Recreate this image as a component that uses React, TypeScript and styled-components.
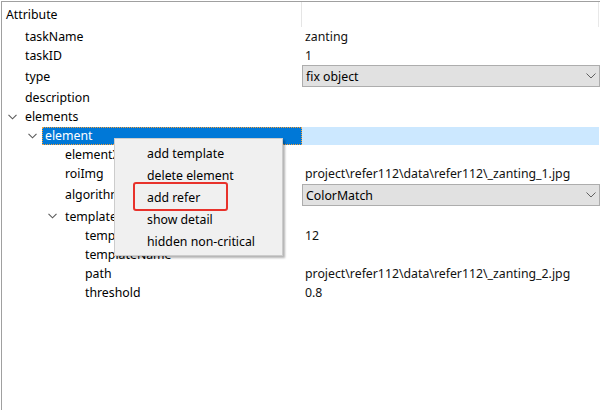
import React from "react";
import styled, { createGlobalStyle } from "styled-components";

const Global = createGlobalStyle`
  html, body { margin: 0; padding: 0; background: #ffffff; }
  body { width: 600px; height: 410px; overflow: hidden; font-family: "Noto Sans", "Open Sans", sans-serif; font-size: 12.3px; color: #000; }
`;

const Panel = styled.div`
  position: relative;
  margin: 1px 0 0 1px;
  height: 409px;
  border-top: 1px solid #a0a0a0;
  border-left: 1px solid #a0a0a0;
  box-sizing: border-box;
  display: flex;
  flex-direction: column;
`;

const Header = styled.div`
  display: grid;
  grid-template-columns: 300px 1fr;
  height: 25px;
`;

const HeaderCell = styled.div<{ $last?: boolean }>`
  display: flex;
  align-items: center;
  padding-left: 4px;
  border-right: 1px solid ${(p) => (p.$last ? "#e8e8e8" : "#e5e5e5")};
  margin-right: ${(p) => (p.$last ? "1px" : "0")};
`;

const Body = styled.div`
  display: flex;
  flex-direction: column;
`;

const Row = styled.div<{ $h: number }>`
  display: grid;
  grid-template-columns: 300px 1fr;
  height: ${(p) => p.$h}px;
  align-items: center;
`;

const NameCell = styled.div<{ $indent: number }>`
  display: flex;
  align-items: center;
  height: 100%;
  padding-left: ${(p) => p.$indent}px;
`;

const Arrow = styled.span`
  width: 20px;
  flex: 0 0 20px;
  display: flex;
  align-items: center;
  justify-content: flex-start;
  padding-left: 6px;
  box-sizing: border-box;
`;

const Label = styled.span<{ $selected?: boolean }>`
  display: flex;
  align-items: center;
  height: ${(p) => (p.$selected ? "18px" : "auto")};
  flex: ${(p) => (p.$selected ? "1" : "0 0 auto")};
  padding-left: 3px;
  background: ${(p) => (p.$selected ? "#0078d7" : "transparent")};
  color: ${(p) => (p.$selected ? "#ffffff" : "#000000")};
  outline: ${(p) => (p.$selected ? "1px dotted #f7a13a" : "none")};
  outline-offset: -1px;
  white-space: nowrap;
`;

const ValueCell = styled.div<{ $selected?: boolean }>`
  display: flex;
  align-items: center;
  height: ${(p) => (p.$selected ? "18px" : "100%")};
  padding-left: 3px;
  background: ${(p) => (p.$selected ? "#cce8ff" : "transparent")};
  margin-right: ${(p) => (p.$selected ? "1px" : "0")};
  color: #111;
  white-space: nowrap;
`;

const Combo = styled.div<{ $offset: number }>`
  display: flex;
  align-items: center;
  justify-content: space-between;
  height: 22px;
  box-sizing: border-box;
  margin-top: ${(p) => p.$offset}px;
  border: 1px solid #adadad;
  background: #e1e1e1;
  padding: 0 3px 0 3px;
  color: #000;
`;

const Menu = styled.div`
  position: absolute;
  left: 112px;
  top: 136px;
  width: 167px;
  padding: 3px 0;
  background: #f0f0f0;
  border: 1px solid #cccccc;
  box-shadow: 2px 2px 2px rgba(0, 0, 0, 0.3);
  display: flex;
  flex-direction: column;
`;

const MenuItem = styled.div`
  height: 22px;
  display: flex;
  align-items: center;
  padding-left: 32px;
  color: #000;
  white-space: nowrap;
`;

const Highlight = styled.div`
  position: absolute;
  left: 131px;
  top: 180px;
  width: 95px;
  height: 29px;
  box-sizing: border-box;
  border: 2px solid #e8322b;
  border-radius: 3px;
`;

const Chevron = () => (
  <svg width="9" height="6" viewBox="0 0 9 6">
    <path d="M0.5 0.8 L4.5 4.8 L8.5 0.8" fill="none" stroke="#5a5a5a" strokeWidth="1.1" />
  </svg>
);

const ComboChevron = () => (
  <svg width="10" height="6" viewBox="0 0 10 6">
    <path d="M0.5 0.5 L5 5 L9.5 0.5" fill="none" stroke="#606060" strokeWidth="1" />
  </svg>
);

type Item = {
  name: string;
  level: number;
  h: number;
  expander?: boolean;
  value?: string;
  combo?: boolean;
  comboOffset?: number;
  selected?: boolean;
};

const rows: Item[] = [
  { name: "taskName", level: 0, h: 19, value: "zanting" },
  { name: "taskID", level: 0, h: 19, value: "1" },
  { name: "type", level: 0, h: 23, value: "fix object", combo: true, comboOffset: -1 },
  { name: "description", level: 0, h: 19 },
  { name: "elements", level: 0, h: 19, expander: true },
  { name: "element", level: 1, h: 19, expander: true, selected: true },
  { name: "elementX", level: 2, h: 19 },
  { name: "roiImg", level: 2, h: 19, value: "project\\refer112\\data\\refer112\\_zanting_1.jpg" },
  { name: "algorithm", level: 2, h: 23, value: "ColorMatch", combo: true, comboOffset: 1 },
  { name: "templates", level: 2, h: 20, expander: true },
  { name: "templateID", level: 3, h: 19, value: "12" },
  { name: "templateName", level: 3, h: 19 },
  { name: "path", level: 3, h: 19, value: "project\\refer112\\data\\refer112\\_zanting_2.jpg" },
  { name: "threshold", level: 3, h: 19, value: "0.8" },
];

const menuItems = ["add template", "delete element", "add refer", "show detail", "hidden non-critical"];

export default function App() {
  return (
    <>
      <Global />
      <Panel>
        <Header>
          <HeaderCell>Attribute</HeaderCell>
          <HeaderCell $last />
        </Header>
        <Body>
          {rows.map((r) => (
            <Row key={r.name} $h={r.h}>
              <NameCell $indent={r.level * 20}>
                <Arrow>{r.expander ? <Chevron /> : null}</Arrow>
                <Label $selected={r.selected}>{r.name}</Label>
              </NameCell>
              {r.combo ? (
                <Combo $offset={r.comboOffset ?? 0}>
                  <span>{r.value}</span>
                  <ComboChevron />
                </Combo>
              ) : (
                <ValueCell $selected={r.selected}>{r.value ?? ""}</ValueCell>
              )}
            </Row>
          ))}
        </Body>
        <Menu>
          {menuItems.map((m) => (
            <MenuItem key={m}>{m}</MenuItem>
          ))}
        </Menu>
        <Highlight />
      </Panel>
    </>
  );
}
